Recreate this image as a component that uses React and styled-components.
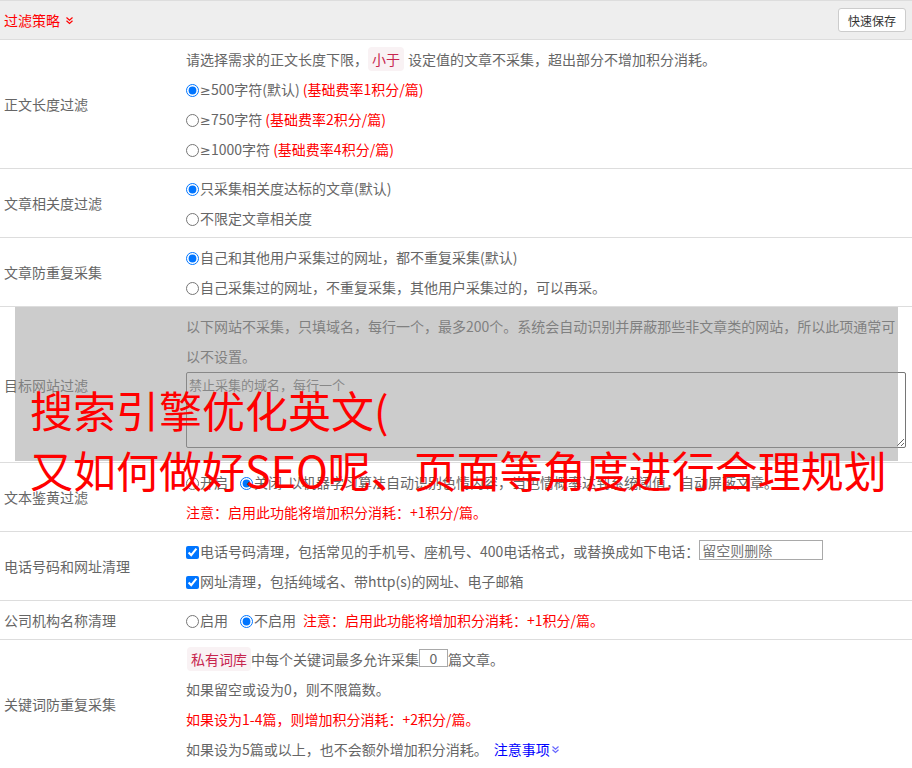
import styled, { createGlobalStyle } from "styled-components";

const GlobalStyle = createGlobalStyle`
  body {
    margin: 0;
    background: #fff;
    font-family: "Noto Sans CJK SC", "Liberation Sans", sans-serif;
    font-size: 14px;
    color: #666;
  }
`;

const red = "#f00";
const border = "#ddd";

const Page = styled.div`
  width: 912px;
  overflow: hidden;
`;

const Header = styled.div`
  height: 38px;
  display: flex;
  align-items: center;
  justify-content: space-between;
  background: #eee;
  border-top: 1px solid ${border};
  border-bottom: 1px solid ${border};
`;

const Title = styled.div`
  padding-left: 4px;
  color: ${red};
  font-size: 14px;
  display: flex;
  align-items: center;
  gap: 5px;
`;

const SaveButton = styled.button`
  margin-right: 6px;
  height: 24px;
  padding: 0 9px;
  font-family: inherit;
  font-size: 12px;
  color: #333;
  background: #fff;
  border: 1px solid #ccc;
  border-radius: 3px;
`;

const Row = styled.div`
  position: relative;
  display: grid;
  grid-template-columns: 186px 1fr;
  padding: 4px 0;
  border-bottom: 1px solid ${border};
`;

const Label = styled.div`
  align-self: center;
  padding-left: 4px;
  line-height: 30px;
`;

const Content = styled.div`
  padding-right: 6px;
`;

const Line = styled.div`
  height: 30px;
  line-height: 30px;
  white-space: nowrap;
  color: ${(p) => (p.$red ? red : "#666")};
`;

const Para = styled.div`
  width: 720px;
  line-height: 30px;
`;

const Red = styled.span`
  color: ${red};
`;

const Sym = styled.span`
  font-family: "DejaVu Sans", sans-serif;
  font-size: 13px;
  line-height: 0;
`;

const Code = styled.span`
  padding: 2px 4px;
  margin: 0 ${(p) => p.$after || 0}px 0 ${(p) => p.$before || 0}px;
  color: #c7254e;
  background: #f9f2f4;
  border-radius: 4px;
`;

const Choice = styled.label`
  margin-right: ${(p) => p.$gap || 0}px;
  input {
    width: 13px;
    height: 13px;
    margin: 0 1px 0 0;
    vertical-align: -2px;
  }
`;

const TextArea = styled.textarea`
  display: block;
  box-sizing: border-box;
  width: 720px;
  height: 76px;
  margin: 1px 0 10px;
  padding: 2px;
  font-family: inherit;
  font-size: 13px;
  color: #666;
  border: 1px solid #767676;
  border-radius: 2px;
  &::placeholder {
    color: #757575;
  }
`;

const TextInput = styled.input`
  box-sizing: border-box;
  width: ${(p) => p.$w}px;
  height: ${(p) => p.$h}px;
  padding: 0 2px;
  vertical-align: 1px;
  font-family: inherit;
  font-size: 14px;
  color: #666;
  text-align: ${(p) => p.$align || "left"};
  border: 1px solid #a9a9a9;
  &::placeholder {
    color: #757575;
  }
`;

const Link = styled.a`
  margin-left: 6px;
  color: #00f;
  text-decoration: none;
  display: inline-flex;
  align-items: center;
  gap: 1px;
`;

const Shade = styled.div`
  position: absolute;
  left: 15px;
  right: 14px;
  top: 0;
  bottom: 1px;
  background: rgba(153, 153, 153, 0.5);
  pointer-events: none;
`;

const Headline = styled.div`
  position: absolute;
  left: 30px;
  top: 72px;
  z-index: 2;
  font-size: 43px;
  line-height: 60px;
  color: ${red};
  white-space: nowrap;
  pointer-events: none;
`;

const Chevrons = ({ color }) => (
  <svg width="9" height="9" viewBox="0 0 9 9" fill="none" stroke={color} strokeWidth="1.2">
    <polyline points="1.5,1.5 4.5,4.2 7.5,1.5" />
    <polyline points="1.5,4.8 4.5,7.5 7.5,4.8" />
  </svg>
);

const Radio = ({ name, checked, children, gap }) => (
  <Choice $gap={gap}>
    <input type="radio" name={name} defaultChecked={checked} />
    {children}
  </Choice>
);

const Check = ({ children }) => (
  <Choice>
    <input type="checkbox" defaultChecked />
    {children}
  </Choice>
);

export default function App() {
  return (
    <Page>
      <GlobalStyle />
      <Header>
        <Title>
          过滤策略 <Chevrons color={red} />
        </Title>
        <SaveButton>快速保存</SaveButton>
      </Header>

      <Row>
        <Label>正文长度过滤</Label>
        <Content>
          <Line>
            请选择需求的正文长度下限，<Code $after={4}>小于</Code>设定值的文章不采集，超出部分不增加积分消耗。
          </Line>
          <Line>
            <Radio name="len" checked><Sym>≥</Sym>500字符(默认)</Radio> <Red>(基础费率1积分/篇)</Red>
          </Line>
          <Line>
            <Radio name="len"><Sym>≥</Sym>750字符</Radio> <Red>(基础费率2积分/篇)</Red>
          </Line>
          <Line>
            <Radio name="len"><Sym>≥</Sym>1000字符</Radio> <Red>(基础费率4积分/篇)</Red>
          </Line>
        </Content>
      </Row>

      <Row>
        <Label>文章相关度过滤</Label>
        <Content>
          <Line>
            <Radio name="rel" checked>只采集相关度达标的文章(默认)</Radio>
          </Line>
          <Line>
            <Radio name="rel">不限定文章相关度</Radio>
          </Line>
        </Content>
      </Row>

      <Row>
        <Label>文章防重复采集</Label>
        <Content>
          <Line>
            <Radio name="dup" checked>自己和其他用户采集过的网址，都不重复采集(默认)</Radio>
          </Line>
          <Line>
            <Radio name="dup">自己采集过的网址，不重复采集，其他用户采集过的，可以再采。</Radio>
          </Line>
        </Content>
      </Row>

      <Row>
        <Label>目标网站过滤</Label>
        <Content>
          <Para>
            以下网站不采集，只填域名，每行一个，最多200个。系统会自动识别并屏蔽那些非文章类的网站，所以此项通常可以不设置。
          </Para>
          <TextArea placeholder="禁止采集的域名，每行一个" />
        </Content>
        <Shade />
        <Headline>
          <div>搜索引擎优化英文(</div>
          <div>又如何做好SEO呢、页面等角度进行合理规划</div>
        </Headline>
      </Row>

      <Row>
        <Label>文本鉴黄过滤</Label>
        <Content>
          <Line>
            <Radio name="porn" gap={12}>开启</Radio>
            <Radio name="porn" checked gap={6}>关闭</Radio>
            以机器学习算法自动识别色情内容，当色情概率达到系统阈值，自动屏蔽文章。
          </Line>
          <Line $red>注意：启用此功能将增加积分消耗：+1积分/篇。</Line>
        </Content>
      </Row>

      <Row>
        <Label>电话号码和网址清理</Label>
        <Content>
          <Line>
            <Check>电话号码清理，包括常见的手机号、座机号、400电话格式，或替换成如下电话：</Check>
            <TextInput $w={124} $h={20} placeholder="留空则删除" />
          </Line>
          <Line>
            <Check>网址清理，包括纯域名、带http(s)的网址、电子邮箱</Check>
          </Line>
        </Content>
      </Row>

      <Row>
        <Label>公司机构名称清理</Label>
        <Content>
          <Line>
            <Radio name="org" gap={12}>启用</Radio>
            <Radio name="org" checked gap={7}>不启用</Radio>
            <Red>注意：启用此功能将增加积分消耗：+1积分/篇。</Red>
          </Line>
        </Content>
      </Row>

      <Row>
        <Label>关键词防重复采集</Label>
        <Content>
          <Line>
            <Code $before={1}>私有词库</Code>中每个关键词最多允许采集
            <TextInput $w={29} $h={18} $align="center" defaultValue="0" />
            篇文章。
          </Line>
          <Line>如果留空或设为0，则不限篇数。</Line>
          <Line $red>如果设为1-4篇，则增加积分消耗：+2积分/篇。</Line>
          <Line>
            如果设为5篇或以上，也不会额外增加积分消耗。
            <Link href="#">
              注意事项
              <Chevrons color="#66f" />
            </Link>
          </Line>
        </Content>
      </Row>
    </Page>
  );
}
